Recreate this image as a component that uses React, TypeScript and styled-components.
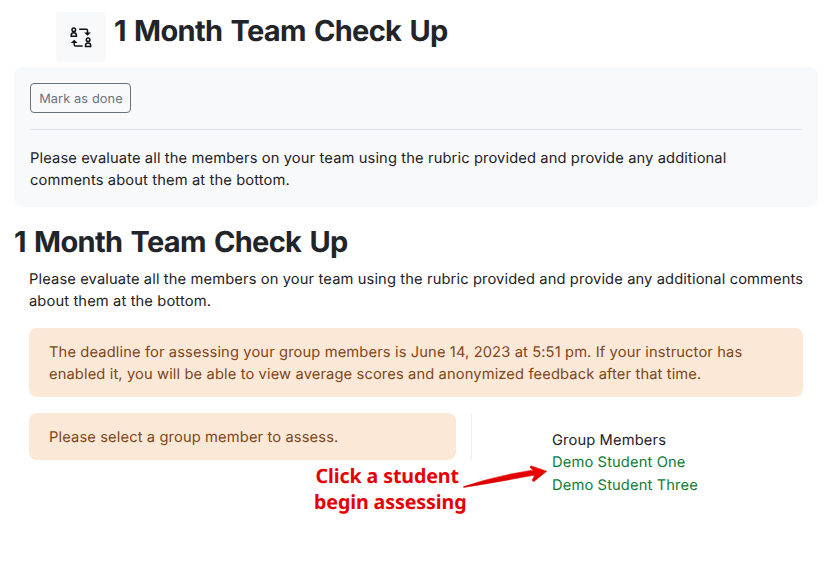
import React from "react";
import styled, { createGlobalStyle } from "styled-components";

const GlobalStyle = createGlobalStyle`
  * { box-sizing: border-box; }
  body {
    margin: 0;
    background: #fff;
    color: #1d2125;
    font-family: Inter, "Liberation Sans", sans-serif;
    font-size: 14.7px;
    line-height: 22.4px;
    letter-spacing: 0.124px;
    text-rendering: geometricPrecision;
  }
`;

const Page = styled.main`
  position: relative;
  width: 832px;
  height: 567px;
  padding: 12px 14px 0;
  overflow: hidden;
`;

const Header = styled.header`
  display: flex;
  gap: 8px;
  height: 55px;
  padding-left: 42px;
`;

const IconTile = styled.div`
  display: flex;
  align-items: center;
  justify-content: center;
  width: 50px;
  height: 50px;
  border-radius: 4px;
  background: #f8f9fb;
`;

const Title = styled.h1`
  margin: 0;
  color: #212529;
  font-size: 29px;
  font-weight: 700;
  line-height: 38px;
  letter-spacing: -0.69px;
  word-spacing: 2.1px;
  white-space: nowrap;
`;

const ActivityInfo = styled.section`
  height: 140px;
  padding: 16px;
  border-radius: 8px;
  background: #f8f9fb;
`;

const DoneButton = styled.button`
  display: block;
  width: 101px;
  height: 30px;
  padding: 2px 0 0 1px;
  border: 1px solid #6a737b;
  border-radius: 4px;
  background: transparent;
  color: #6a737b;
  font: 400 12.8px/26px Inter, sans-serif;
  letter-spacing: 0.1px;
  text-rendering: geometricPrecision;

  span {
    display: block;
    padding-top: 1px;
  }
`;

const Divider = styled.hr`
  height: 1px;
  margin: 16px 0 17px;
  border: 0;
  background: #dee2e6;
`;

const Paragraph = styled.p`
  margin: 0;
  white-space: nowrap;
`;

const Activity = styled.section`
  padding-top: 16px;
`;

const Content = styled.div`
  padding: 7px 15px 0;
`;

const Alert = styled.div`
  padding: 13px 20px 0;
  border-radius: 8px;
  background: #fce8d7;
  color: #7d4517;
  white-space: nowrap;
`;

const DeadlineAlert = styled(Alert)`
  height: 69px;
  margin: 15.2px 0 16px;
`;

const SelectAlert = styled(Alert)`
  width: 427px;
  height: 47px;
`;

const Columns = styled.div`
  display: flex;
`;

const Members = styled.aside`
  height: 47px;
  margin-left: 15px;
  padding: 16px 0 0 80px;
  border-left: 1px solid #eceef0;
`;

const MemberLink = styled.a`
  display: block;
  color: #0f7b34;
  text-decoration: none;
  white-space: nowrap;
`;

const Callout = styled.div`
  position: absolute;
  top: 463px;
  left: 314px;
  color: #e60000;
  font: 700 19.6px/26px "Noto Sans", "Open Sans", sans-serif;
  letter-spacing: -0.1px;
  text-align: center;
  white-space: nowrap;

  span {
    display: block;
    margin-left: -6px;
  }
`;

const Arrow = styled.svg`
  position: absolute;
  top: 460px;
  left: 460px;
`;

const PeerIcon = () => (
  <svg width="24" height="24" viewBox="0 0 24 24" fill="none" stroke="#111" strokeWidth="1.5">
    <circle cx="4.8" cy="4.8" r="1.8" />
    <path d="M2.2 11.2v-.8a2.6 2.6 0 0 1 5.2 0v.8z" />
    <circle cx="19.1" cy="14.8" r="1.8" />
    <path d="M16.5 21.5v-.9a2.6 2.6 0 0 1 5.2 0v.9z" />
    <path d="M10.2 4.2h7.1q1.2 0 1.2 1.2v3.4M13.7 21H6.5q-1.3 0-1.3-1.3v-3.2" />
    <path d="m16.9 8.2 1.6 1.6 1.6-1.6zM3.6 17.3l1.6-1.6 1.6 1.6z" fill="#111" />
  </svg>
);

export default function App() {
  return (
    <>
      <GlobalStyle />
      <Page>
        <Header>
          <IconTile><PeerIcon /></IconTile>
          <Title>1 Month Team Check Up</Title>
        </Header>
        <ActivityInfo>
          <DoneButton><span>Mark as done</span></DoneButton>
          <Divider />
          <Paragraph>
            Please evaluate all the members on your team using the rubric provided and provide any additional<br />
            comments about them at the bottom.
          </Paragraph>
        </ActivityInfo>
        <Activity>
          <Title as="h2">1 Month Team Check Up</Title>
          <Content>
            <Paragraph>
              Please evaluate all the members on your team using the rubric provided and provide any additional comments<br />
              about them at the bottom.
            </Paragraph>
            <DeadlineAlert>
              The deadline for assessing your group members is June 14, 2023 at 5:51 pm. If your instructor has<br />
              enabled it, you will be able to view average scores and anonymized feedback after that time.
            </DeadlineAlert>
            <Columns>
              <SelectAlert>Please select a group member to assess.</SelectAlert>
              <Members>
                <Paragraph>Group Members</Paragraph>
                <MemberLink href="#one">Demo Student One</MemberLink>
                <MemberLink href="#three">Demo Student Three</MemberLink>
              </Members>
            </Columns>
          </Content>
        </Activity>
        <Callout><span>Click a student</span>begin assessing</Callout>
        <Arrow width="90" height="32" viewBox="0 0 90 32">
          <defs>
            <linearGradient id="arrow-fill" x1="0" y1="0" x2="0" y2="1">
              <stop offset="0" stopColor="#f20000" />
              <stop offset="1" stopColor="#d40000" />
            </linearGradient>
          </defs>
          <path
            d="M3.6 26.6 Q35 16 70.8 10.4 L73.5 10.6 L70.3 7.8 Q69.4 6.2 71.3 5.9 L86.7 11.2 L74.2 21.3 Q72.3 21.8 72.2 19.8 L74.6 15.8 L72 15.6 Q38 22 3.6 27.5z"
            fill="url(#arrow-fill)"
            stroke="#d80000"
            strokeWidth="0.5"
            strokeLinejoin="round"
          />
        </Arrow>
      </Page>
    </>
  );
}
